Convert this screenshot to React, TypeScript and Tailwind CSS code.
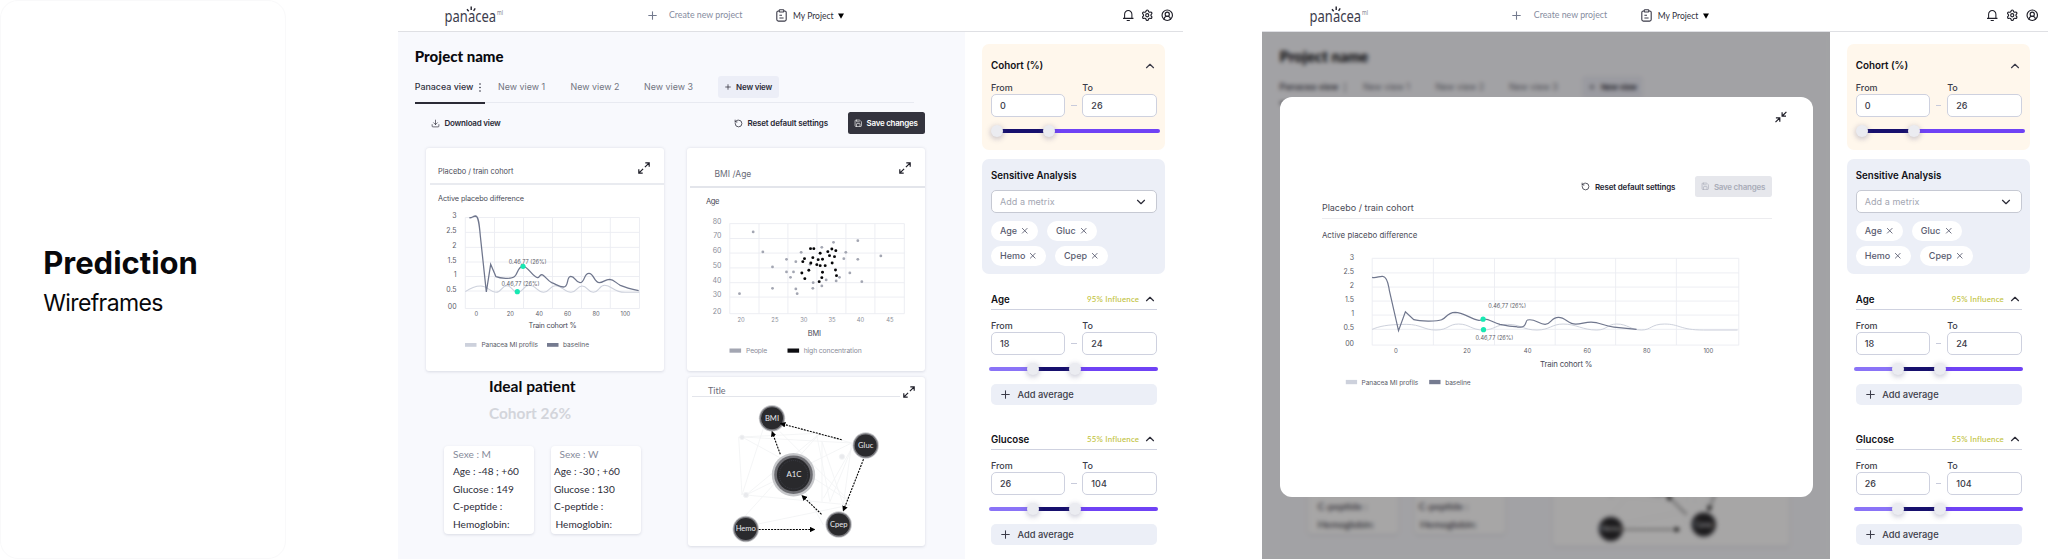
import React from "react";
import { ChevronDown, ChevronUp, CircleUserRound, Download, Plus, RotateCcw, Save, Settings, X } from "lucide-react";
import { RiNotification3Line } from "react-icons/ri";

const mulish = "[font-family:Lato,sans-serif]";

function Logo() {
  return (
    <svg className="ml-[43.5px] h-[31px] w-[66px] shrink-0 overflow-visible" viewBox="441 0 66 31" fill="none">
      <text x="444.6" y="21.6" fontFamily="Noto Sans" fontWeight="400" fontSize="16.5" fill="#3c3c4c" textLength="51.4" lengthAdjust="spacingAndGlyphs">panacea</text>
      <text x="497" y="14.6" fontFamily="Noto Sans" fontWeight="400" fontSize="6.2" fill="#7a7a8c" textLength="6" lengthAdjust="spacingAndGlyphs">ml</text>
      <path d="M467 9.2l1.7 2M471.2 6.4v3.6M475.2 8.4l-1.6 2.4" stroke="#20202c" strokeWidth="1.4" />
    </svg>
  );
}

function Header() {
  return (
    <header className="flex h-8 items-center border-b border-[#dfe0e4] bg-white">
      <Logo />
      <Plus className="ml-[138.5px] size-[13px] shrink-0 text-[#737a8e]" strokeWidth={2} />
      <span className={`ml-[10.5px] w-[107px] whitespace-nowrap text-[8.8px] leading-none text-[#868ca0] ${mulish}`}>Create new project</span>
      <svg className="h-[13px] w-[11px] shrink-0" viewBox="0 0 11 13" fill="none" stroke="#3a3a48" strokeWidth="1.1">
        <path d="M3.2 2H2.4C1.4 2 .8 2.6.8 3.6v6.9c0 1 .6 1.6 1.6 1.6h6.2c1 0 1.6-.6 1.6-1.6V3.6c0-1-.6-1.6-1.6-1.6h-.8" />
        <rect x="3.2" y=".8" width="4.6" height="2.2" rx=".7" />
        <path d="M3.4 6.2h2.6M3.4 9h4.2" />
      </svg>
      <span className={`ml-[6px] w-[45px] whitespace-nowrap pt-[1px] text-[8.5px] leading-none text-[#2f2f3c] ${mulish}`}>My Project</span>
      <svg className="h-[6px] w-[6px] shrink-0" viewBox="0 0 6 6"><path d="M0 .4h6L3 5.8z" fill="#000" /></svg>
      <div className="ml-auto mr-[9.5px] flex items-center gap-[7.2px] text-[#1e1e28]">
        <RiNotification3Line className="size-[12.5px]" />
        <Settings className="size-[12.5px]" strokeWidth={2.2} />
        <CircleUserRound className="size-[12.5px]" strokeWidth={2.2} />
      </div>
    </header>
  );
}

function Expand({ className = "" }: { className?: string }) {
  return (
    <svg className={`size-[12px] shrink-0 ${className}`} viewBox="0 0 12 12" fill="none" stroke="#1e1e28" strokeWidth="1.2">
      <path d="M7.3.9h3.9v3.9M11 1.1L6.9 5.2M4.7 11.1H.8V7.2M1 10.9l4.1-4.1" />
    </svg>
  );
}

function Collapse({ className = "" }: { className?: string }) {
  return (
    <svg className={`size-[12px] shrink-0 ${className}`} viewBox="0 0 12 12" fill="none" stroke="#1e1e28" strokeWidth="1.2">
      <path d="M11 5.2H7.1V1.3M7.3 5L11.4.9M.9 6.9h3.9v3.9M4.6 7.1L.5 11.2" />
    </svg>
  );
}

function Toolbar({ muted = false }: { muted?: boolean }) {
  return (
    <div className="flex h-[21.5px] items-center text-[8px] font-semibold leading-none text-[#262633]">
      <RotateCcw className="size-[9px]" strokeWidth={2} />
      <span className="ml-[4.5px] w-[100.5px] whitespace-nowrap tracking-[-0.16px]">Reset default settings</span>
      <div className={`flex h-full w-[76.5px] items-center rounded-[2.5px] pl-[6px] ${muted ? "bg-[#e6e7ec] text-[#a9acb8]" : "bg-[#34343e] text-white"}`}>
        <Save className="size-[8.5px]" strokeWidth={1.8} />
        <span className="ml-[4px] whitespace-nowrap tracking-[-0.25px]">Save changes</span>
      </div>
    </div>
  );
}

type Label = [string, number, number];

function Labels({ items, size, fill, anchor }: { items: Label[]; size: number; fill: string; anchor: "start" | "middle" | "end" }) {
  return (
    <g fontSize={size} fill={fill} textAnchor={anchor}>
      {items.map(([t, x, y]) => (
        <text key={t + x + y} x={x} y={y + size * 0.364}>{t}</text>
      ))}
    </g>
  );
}

function Grid({ xs, ys }: { xs: number[]; ys: number[] }) {
  const x0 = xs[0], x1 = xs[xs.length - 1], y0 = ys[0], y1 = ys[ys.length - 1];
  return (
    <path
      d={xs.map((x) => `M${x} ${y0}V${y1}`).join("") + ys.map((y) => `M${x0} ${y}H${x1}`).join("")}
      stroke="#ebecf2"
      strokeWidth="0.9"
      fill="none"
    />
  );
}

function PlaceboChart() {
  return (
    <svg className="block h-[184px] w-[238px] [font-family:Inter,sans-serif]" viewBox="426 185 238 184">
      <text x="438" y="200.8" fontSize="7.3" fill="#4a4b57" textLength="86">Active placebo difference</text>
      <Grid xs={[465.3, 494.5, 523.5, 552.5, 581.5, 610.3, 639.5]} ys={[217.5, 232.4, 247.4, 262, 276.5, 291, 308.5]} />
      <Labels size={7} fill="#5b5c68" anchor="end" items={[["3", 456.6, 215.8], ["2.5", 456.6, 230.4], ["2", 456.6, 245.2], ["1.5", 456.6, 260], ["1", 456.6, 274.6], ["0.5", 456.6, 289.2], ["00", 456.6, 306]]} />
      <Labels size={5.8} fill="#5b5c68" anchor="middle" items={[["0", 476.3, 314], ["20", 510.3, 314], ["40", 539.3, 314], ["60", 567.6, 314], ["80", 596, 314], ["100", 625.4, 314]]} />
      <g transform="translate(400 130) scale(.33333)" fill="none">
        <path d="M196 485C210 475 222 468 242 468C264 468 270 487 288 487C305 487 305 467 320 467C337 467 337 487 353 487C370 487 370 466 388 466C408 466 412 487 431 487C449 487 449 467 466 467C487 467 494 487 513 487C531 487 531 468 546 468C563 468 563 487 580 487C597 487 597 466 614 466C636 466 640 487 675 487H718" stroke="#cdd1dc" strokeWidth="3.2" />
        <path d="M208 263C216 265 218 258 227 258C236 259 238 285 241 318L259 486L272 403L288 440C300 445 335 448 343 440C354 432 352 410 369 409C384 409 396 438 412 443C418 445 418 435 425 434C434 435 442 452 455 458C470 464 478 471 490 471C508 471 498 440 512 439C526 439 526 458 540 458C556 458 550 430 567 430C582 430 582 458 598 458C610 458 614 449 629 448C642 448 648 460 661 466C680 474 698 478 716 482" stroke="#6f768d" strokeWidth="3.8" />
        <circle cx="369" cy="409" r="7.8" fill="#17e8b2" />
        <circle cx="352" cy="485" r="7.8" fill="#17e8b2" />
      </g>
      <Labels size={5.6} fill="#5b5c68" anchor="middle" items={[["0.46,77 (26%)", 527.7, 261.6], ["0.46,77 (26%)", 520.5, 283.6]]} />
      <text x="528.6" y="327.9" fontSize="7.3" fill="#4a4b57" textLength="48">Train cohort %</text>
      <rect x="465" y="343" width="11.5" height="3.8" fill="#cdd1dc" />
      <rect x="547" y="343" width="11.5" height="3.8" fill="#757b90" />
      <g fontSize="6.6" fill="#5b5c68">
        <text x="481.4" y="347.2" textLength="56.5">Panacea MI profils</text>
        <text x="563" y="347.2" textLength="26">baseline</text>
      </g>
    </svg>
  );
}

const people = [
  [248, 305], [277, 365], [306, 410], [207, 490], [306, 474], [348, 387], [376, 394], [392, 366], [348, 425], [369, 425], [360, 441], [376, 476], [380, 490], [427, 474],
  [428, 457], [454, 351], [489, 336], [526, 366], [520, 385], [562, 331], [562, 387], [631, 377], [538, 428], [574, 454], [507, 441], [497, 452], [467, 449], [454, 467], [419, 402],
];
const dense = [
  [420, 355], [430, 355], [402, 385], [397, 394], [427, 382], [443, 388], [456, 387], [449, 369], [472, 364], [484, 356], [496, 361], [477, 376], [492, 379], [421, 398], [439, 403],
  [449, 406], [464, 406], [485, 398], [415, 420], [394, 428], [403, 445], [456, 426], [454, 442], [446, 454], [495, 419], [498, 436],
];

function ScatterChart() {
  return (
    <svg className="block h-[181px] w-[238px] [font-family:Inter,sans-serif]" viewBox="686.5 187.7 238 181">
      <text x="705.5" y="203.8" fontSize="7.6" fill="#4a4b57" textLength="13.5">Age</text>
      <Grid xs={[729.3, 758.5, 787.4, 816.4, 845.4, 874.4, 903.8]} ys={[223.3, 238.2, 252.8, 267.6, 282.4, 296.8, 313.4]} />
      <Labels size={7} fill="#8a8d99" anchor="end" items={[["80", 721, 221], ["70", 721, 235.6], ["60", 721, 250.4], ["50", 721, 265], ["40", 721, 279.7], ["30", 721, 294.6], ["20", 721, 311.5]]} />
      <Labels size={5.8} fill="#8a8d99" anchor="middle" items={[["20", 740.6, 319.6], ["25", 774.4, 319.6], ["30", 803.4, 319.6], ["35", 831.6, 319.6], ["40", 860, 319.6], ["45", 889.5, 319.6]]} />
      <g transform="translate(670 130) scale(.33333)">
        {people.map(([x, y]) => <circle key={`${x}-${y}`} cx={x} cy={y} r="4.2" fill="#a3a6b2" />)}
        {dense.map(([x, y]) => <circle key={`${x}-${y}`} cx={x} cy={y} r="4.4" fill="#050507" />)}
      </g>
      <text x="807.2" y="335.3" fontSize="7.4" fill="#4a4b57" textLength="13.3">BMI</text>
      <rect x="729" y="348.2" width="11.6" height="4.2" fill="#a3a6b2" />
      <rect x="787" y="348.2" width="11.6" height="4.2" fill="#0c0c10" />
      <g fontSize="6.8" fill="#8a8d99">
        <text x="745.6" y="352.8" textLength="21">People</text>
        <text x="803.2" y="352.8" textLength="58">high concentration</text>
      </g>
    </svg>
  );
}

function Node({ x, y, label }: { x: number; y: number; label: string }) {
  return (
    <g>
      <circle cx={x} cy={y} r="13.2" fill="#c9cacd" />
      <circle cx={x} cy={y} r="12.3" fill="#77777c" />
      <circle cx={x} cy={y} r="11" fill="#2a2a2d" />
      <text x={x} y={y + 2.4} textAnchor="middle" fontSize="7.6" fill="#e8e8ec">{label}</text>
    </g>
  );
}

function Network() {
  const id = React.useId();
  return (
    <svg className="block h-[148px] w-[236.5px] [font-family:Lato,sans-serif]" viewBox="688 397 236.5 148">
      <defs>
        <marker id={id} viewBox="0 0 6 6" refX="3" refY="3" markerWidth="5.6" markerHeight="5.6" markerUnits="userSpaceOnUse" orient="auto">
          <path d="M0 0L6 3L0 6z" fill="#000" />
        </marker>
      </defs>
      <g transform="translate(670 365) scale(.33333)" fill="none" stroke="#f2f3f5" strokeWidth="2.6">
        <path d="M216 216L440 205L545 234L216 216L206 216L216 390L280 190M216 216L370 300L540 410L330 200M228 390L450 205L228 450M228 390L545 234L520 420L456 230V410M228 390L540 420L250 480M460 400L545 250L480 410L440 210M400 370L460 480" />
        <circle cx="216" cy="217" r="7" fill="#e9eaed" /><circle cx="228" cy="390" r="8" fill="#e9eaed" /><circle cx="516" cy="275" r="8" fill="#e9eaed" />
      </g>
      <circle cx="793.5" cy="474.7" r="21.7" fill="#c6c7ca" />
      <circle cx="793.5" cy="474.7" r="19.3" fill="#6d6d72" />
      <circle cx="793.5" cy="474.7" r="16.6" fill="#29292c" />
      <circle cx="793.5" cy="474.7" r="14.2" fill="none" stroke="#4c4f5c" strokeWidth=".5" strokeDasharray="1 1" />
      <text x="794" y="477" textAnchor="middle" fontSize="7.8" fill="#e8e8ec">A1C</text>
      <Node x={772} y={418.3} label="BMI" />
      <Node x={865.7} y={445.5} label="Gluc" />
      <Node x={838.7} y={524.5} label="Cpep" />
      <Node x={745.8} y={529} label="Hemo" />
      <g stroke="#000" strokeWidth="1.1" strokeDasharray="2 1.1">
        <path d="M841.7 439.7L782.5 424" markerEnd={`url(#${id})`} />
        <path d="M780.3 454.3L772.7 433.5" markerEnd={`url(#${id})`} />
        <path d="M863.5 459.3L844 509" markerEnd={`url(#${id})`} />
        <path d="M821.5 514.3L803.5 497" markerEnd={`url(#${id})`} />
        <path d="M758.7 529.5H812.5" markerEnd={`url(#${id})`} />
      </g>
    </svg>
  );
}

function Patient({ sex, age, glucose, second = false }: { sex: string; age: string; glucose: string; second?: boolean }) {
  return (
    <div className={`h-[88px] w-[90px] whitespace-nowrap rounded-[4px] bg-white text-[10.1px] leading-[17.4px] text-[#2b2b38] shadow-[0_1px_3px_rgba(60,70,100,0.16)] ${second ? "pl-[3.5px]" : "pl-[9.5px]"}`}>
      <p className={`text-[#868b9b] ${second ? "pl-[5.5px]" : ""}`}>Sexe : {sex}</p>
      <p>Age : {age}</p>
      <p>Glucose : {glucose}</p>
      <p>C-peptide :</p>
      <p className={second ? "pl-[1.5px]" : ""}>Hemoglobin:</p>
    </div>
  );
}

const card = "rounded-[3px] bg-white shadow-[0_0.5px_3px_rgba(60,70,100,0.16)]";

function Main() {
  return (
    <main className="h-[527px] w-[567.5px] overflow-hidden bg-[#f8f9fd] pt-[15.5px]">
      <h1 className={`ml-[17.3px] whitespace-nowrap text-[15px] font-black leading-[16px] text-[#0a0a0e] ${mulish}`}>Project name</h1>
      <nav className="ml-[17.3px] mt-[12.7px] flex h-[22px] items-center whitespace-nowrap text-[8.9px] leading-none text-[#71747f]">
        <span className="w-[64px] font-medium text-[#2f2f3c]">Panacea view</span>
        <svg className="h-[9px] w-[2px]" viewBox="0 0 2 9" fill="#2f2f3c"><circle cx="1" cy="1" r=".8" /><circle cx="1" cy="4.5" r=".8" /><circle cx="1" cy="8" r=".8" /></svg>
        <span className="ml-[17.3px] w-[72.5px]">New view 1</span>
        <span className="w-[73.5px]">New view 2</span>
        <span className="w-[73.5px]">New view 3</span>
        <span className="flex h-full w-[61px] items-center gap-[4.5px] rounded-[3px] bg-[#eceef7] pl-[6px] text-[8px] font-semibold tracking-[-0.2px] text-[#2a2a36]">
          <Plus className="size-[8px]" strokeWidth={2.2} />New view
        </span>
      </nav>
      <div className="ml-[17.3px] mt-[3.8px] h-px w-[499.5px] bg-[#e8eaf1]"><div className="h-[2px] w-[70px] bg-[#2b2b36]" /></div>
      <div className="ml-[33.5px] mt-[9.5px] flex w-[493.5px] items-center justify-between">
        <span className="flex items-center gap-[4.5px] whitespace-nowrap text-[8px] font-semibold leading-none tracking-[-0.22px] text-[#2a2a36]">
          <Download className="size-[9px]" strokeWidth={1.8} />Download view
        </span>
        <Toolbar />
      </div>
      <div className="ml-[28.5px] mt-[14.5px] flex gap-[22.5px]">
        <div className="w-[238px]">
          <section className={`h-[222.5px] ${card}`}>
            <div className="flex h-[35px] items-start justify-between pl-[12px] pr-[14px] pt-[13.5px]">
              <span className="mt-[6.5px] whitespace-nowrap text-[7.4px] leading-none text-[#4a4b57]">Placebo / train cohort</span>
              <Expand />
            </div>
            <div className="ml-[3.5px] h-[1.5px] bg-[#e9ebf0]" />
            <PlaceboChart />
          </section>
          <div className={`ml-[63px] mt-[7px] whitespace-nowrap font-bold leading-[16px] ${mulish}`}>
            <p className="text-[15.6px] text-[#0a0a0e]">Ideal patient</p>
            <p className="mt-[11.5px] text-[15.4px] text-[#d3d5db]">Cohort 26%</p>
          </div>
          <div className={`ml-[17.5px] mt-[24.5px] flex gap-[17px] ${mulish}`}>
            <Patient sex="M" age="-48 ; +60" glucose="149" />
            <Patient sex="W" age="-30 ; +60" glucose="130" second />
          </div>
        </div>
        <div className="w-[238.5px]">
          <section className={`h-[222.5px] ${card}`}>
            <div className="flex h-[38px] items-start justify-between pl-[28px] pr-[14px] pt-[13.5px]">
              <span className="mt-[7.8px] whitespace-nowrap text-[8.5px] leading-none text-[#6a6c78]">BMI /Age</span>
              <Expand />
            </div>
            <div className="ml-[3.5px] h-[1.2px] bg-[#e3e5eb]" />
            <ScatterChart />
          </section>
          <section className={`ml-[1.5px] mt-[6px] h-[169.5px] w-[236.5px] ${card}`}>
            <div className="flex h-[20px] items-start pl-[4px] pr-[10px]">
              <div className="h-full w-[208px] border-b border-[#e3e5eb] pl-[16px] pt-[9px]">
                <span className={`block text-[9px] leading-none text-[#6a6c78] ${mulish}`}>Title</span>
              </div>
              <Expand className="ml-[3px] mt-[9.5px]" />
            </div>
            <Network />
          </section>
        </div>
      </div>
    </main>
  );
}

function Field({ label, value }: { label: string; value: string }) {
  return (
    <label className="block w-[74.5px] text-[9px] font-medium leading-none text-[#3b3b48]">
      <span className="block h-[11.5px]">{label}</span>
      <span className="flex h-[22.5px] items-center rounded-[5px] border border-[#ced1df] bg-white pl-[8px]">{value}</span>
    </label>
  );
}

function Range({ from, to }: { from: string; to: string }) {
  return (
    <div className="flex">
      <Field label="From" value={from} />
      <span className="mx-[5.7px] mt-[22.5px] h-px w-[5.5px] bg-[#c8cbdb]" />
      <Field label="To" value={to} />
    </div>
  );
}

function Slider({ a, b, start = 0 }: { a: number; b: number; start?: number }) {
  return (
    <div className="relative h-[4px] w-[169px]">
      <div className="flex h-full overflow-hidden rounded-full">
        <div className={start ? "bg-transparent" : "bg-[#8a73f7]"} style={{ width: a }} />
        <div className="bg-[#17106e]" style={{ width: b - a }} />
        <div className="flex-1 bg-[#6f42f5]" />
      </div>
      {[a, b].map((x) => (
        <div key={x} className="absolute top-[-4px] size-[12px] rounded-full bg-[#ebecf1] shadow-[0_1.5px_5px_1px_rgba(90,90,130,0.28)]" style={{ left: x - 6 }} />
      ))}
    </div>
  );
}

function Metric({ name, influence, from, to }: { name: string; influence: string; from: string; to: string }) {
  return (
    <section className="ml-[8.7px] h-[140px] w-[166px]">
      <div className="flex h-[21px] items-center border-b border-[#cfd2e0]">
        <h3 className="text-[9.7px] font-semibold leading-none text-[#101016]">{name}</h3>
        <span className={`ml-auto mr-[3.8px] whitespace-nowrap text-[7.9px] font-medium leading-none tracking-[0.2px] text-[#bfc23a] ${mulish}`}>{influence} Influence</span>
        <ChevronUp className="size-[14px] text-[#2a2a36]" strokeWidth={2} />
      </div>
      <div className="pt-[10.3px]"><Range from={from} to={to} /></div>
      <div className="ml-[-2px] mt-[12.2px]"><Slider a={44} b={86.5} /></div>
      <div className="mt-[13.2px] flex h-[21px] items-center rounded-[5px] bg-[#eceff7] pl-[8.5px] text-[9.3px] font-medium text-[#3b3b48]">
        <Plus className="size-[13px]" strokeWidth={1.9} />
        <span className="ml-[5px] whitespace-nowrap leading-none">Add average</span>
      </div>
    </section>
  );
}

function Chip({ label, width }: { label: string; width: number }) {
  return (
    <span className="flex h-[20px] items-center justify-between rounded-full bg-white pl-[9px] pr-[8.5px] text-[9px] font-medium leading-none text-[#5a5c70]" style={{ width }}>
      {label}
      <X className="size-[9.5px]" strokeWidth={2.2} />
    </span>
  );
}

function Sidebar() {
  return (
    <aside className="h-[527px] w-[218px] bg-white pl-[17.3px] pt-[12.3px]">
      <section className="h-[105.7px] w-[183px] rounded-[7px] bg-[#fff7ec] pl-[8.7px] pt-[12.7px]">
        <div className="flex h-[18px] w-[166px] items-center justify-between">
          <h3 className="whitespace-nowrap text-[9.8px] font-semibold leading-none text-[#101016]">Cohort (%)</h3>
          <ChevronUp className="size-[14px] text-[#3a3a48]" strokeWidth={2} />
        </div>
        <div className="mt-[7.7px]"><Range from="0" to="26" /></div>
        <div className="mt-[12.1px]"><Slider a={6.5} b={58.5} start={1} /></div>
      </section>
      <section className="mt-[8.7px] h-[115.6px] w-[183px] rounded-[7px] bg-[#eceff7] pl-[8.7px] pt-[12px]">
        <h3 className="whitespace-nowrap text-[9.7px] font-semibold leading-none text-[#101016]">Sensitive Analysis</h3>
        <div className="mt-[10.1px] flex h-[22.5px] w-[166px] items-center justify-between rounded-[5px] border border-[#c6c9d3] bg-white pl-[8px] pr-[7.5px] text-[9px] text-[#a3a6b2]">
          <span className="whitespace-nowrap leading-none tracking-[0.05px]">Add a metrix</span>
          <ChevronDown className="size-[14px] text-[#2a2a36]" strokeWidth={2} />
        </div>
        <div className="mt-[8px] flex gap-[8.5px]"><Chip label="Age" width={47.5} /><Chip label="Gluc" width={50} /></div>
        <div className="mt-[5px] flex gap-[8.5px]"><Chip label="Hemo" width={55.5} /><Chip label="Cpep" width={53} /></div>
      </section>
      <div className="mt-[15.2px]">
        <Metric name="Age" influence="95%" from="18" to="24" />
        <Metric name="Glucose" influence="55%" from="26" to="104" />
      </div>
    </aside>
  );
}

function WideChart() {
  return (
    <svg className="block h-[170px] w-[450px] [font-family:Inter,sans-serif]" viewBox="1322 241.3 450 170">
      <Grid xs={[1372.2, 1433.4, 1494.5, 1555.2, 1615.6, 1676.4, 1738.8]} ys={[258.6, 273.2, 287.4, 301.4, 315.4, 329.6, 345.4]} />
      <Labels size={7} fill="#5b5c68" anchor="end" items={[["3", 1354, 257.4], ["2.5", 1354, 271.6], ["2", 1354, 285.6], ["1.5", 1354, 299.8], ["1", 1354, 313.8], ["0.5", 1354, 327.8], ["00", 1354, 344]]} />
      <Labels size={6} fill="#5b5c68" anchor="middle" items={[["0", 1395.8, 351.5], ["20", 1467, 351.5], ["40", 1527.6, 351.5], ["60", 1587.2, 351.5], ["80", 1646.8, 351.5], ["100", 1708.4, 351.5]]} />
      <g transform="translate(1255 230) scale(.3827 .33333)" fill="none">
        <path vectorEffect="non-scaling-stroke" strokeWidth="1" stroke="#cdd1dc" d="M306 299C325 290 345 284 395 284C435 284 440 301 473 301C505 301 505 283 532 283C560 283 565 301 597 301C625 301 630 284 660 284C695 284 700 301 737 301C770 301 775 283 805 283C840 283 855 301 893 301C920 301 920 283 945 283C975 283 980 301 1010 301C1035 301 1035 283 1070 283C1110 283 1110 301 1172 301H1261" />
        <path vectorEffect="non-scaling-stroke" strokeWidth="1.2" stroke="#6f768d" d="M306 143C316 147 326 138 334 140C344 141 348 158 351 182L375 303L393 246L415 270C430 275 475 276 488 270C500 266 500 249 523 248C545 248 563 268 585 272C592 273 592 267 600 268C612 268 622 278 640 284C655 288 680 292 695 292C710 292 706 273 712 271C730 265 742 284 758 284C775 284 772 263 793 263C812 263 818 283 838 283C853 283 862 277 878 277C900 277 915 290 938 292L997 299" />
      </g>
      <circle cx="1483.1" cy="319.5" r="2.6" fill="#17e8b2" />
      <circle cx="1483.5" cy="330" r="2.6" fill="#17e8b2" />
      <Labels size={5.6} fill="#5b5c68" anchor="middle" items={[["0.46,77 (26%)", 1507.2, 306.5], ["0.46,77 (26%)", 1494.4, 338.3]]} />
      <text x="1540" y="367.6" fontSize="7.8" fill="#4a4b57" textLength="52.5">Train cohort %</text>
      <rect x="1345.8" y="380.2" width="11.3" height="4.3" fill="#cdd1dc" />
      <rect x="1429.2" y="380.2" width="11.3" height="4.3" fill="#757b90" />
      <g fontSize="6.6" fill="#5b5c68">
        <text x="1361.6" y="385" textLength="56.6">Panacea MI profils</text>
        <text x="1445.2" y="385" textLength="25.5">baseline</text>
      </g>
    </svg>
  );
}

function Modal() {
  return (
    <div className="absolute inset-0 bg-[#020100]/35 pl-[17.3px] pt-[65.3px] backdrop-blur-[2px]">
      <div className="h-[399.7px] w-[533px] rounded-[12px] bg-white pl-[42.3px]">
        <div className="flex justify-end pr-[26px] pt-[13.5px]"><Collapse /></div>
        <div className="mt-[53.2px] flex w-[450px] justify-end"><Toolbar muted /></div>
        <div className="mt-[6px] h-[16px] w-[450px] border-b-[1.5px] border-[#ececef] pt-0 text-[9px] leading-none text-[#4a4b57]">
          <span className="block whitespace-nowrap">Placebo / train cohort</span>
        </div>
        <p className="mt-[12.5px] whitespace-nowrap text-[7.9px] leading-none text-[#4a4b57]">Active placebo difference</p>
        <div className="mt-[1.4px]"><WideChart /></div>
      </div>
    </div>
  );
}

function Screen({ modal = false }: { modal?: boolean }) {
  return (
    <div className="h-[559px] w-[785.5px] shrink-0 overflow-hidden">
      <Header />
      <div className="flex">
        <div className="relative shrink-0">
          <Main />
          {modal && <Modal />}
        </div>
        <Sidebar />
      </div>
    </div>
  );
}

export default function App() {
  return (
    <div className="flex h-[559px] w-[2048px] overflow-hidden bg-white [font-family:Inter,sans-serif]">
      <div className="flex w-[286px] shrink-0 flex-col rounded-[18px] border border-[#f9f9fa] bg-white pl-[42.2px] pt-[246px] text-[#08080b]">
        <h2 className="text-[31px] font-bold leading-[32px]">Prediction</h2>
        <p className="mt-[11px] text-[23px] leading-[26px] tracking-[-0.6px]">Wireframes</p>
      </div>
      <div className="ml-[111.5px] flex gap-[79.3px]">
        <Screen />
        <Screen modal />
      </div>
    </div>
  );
}
